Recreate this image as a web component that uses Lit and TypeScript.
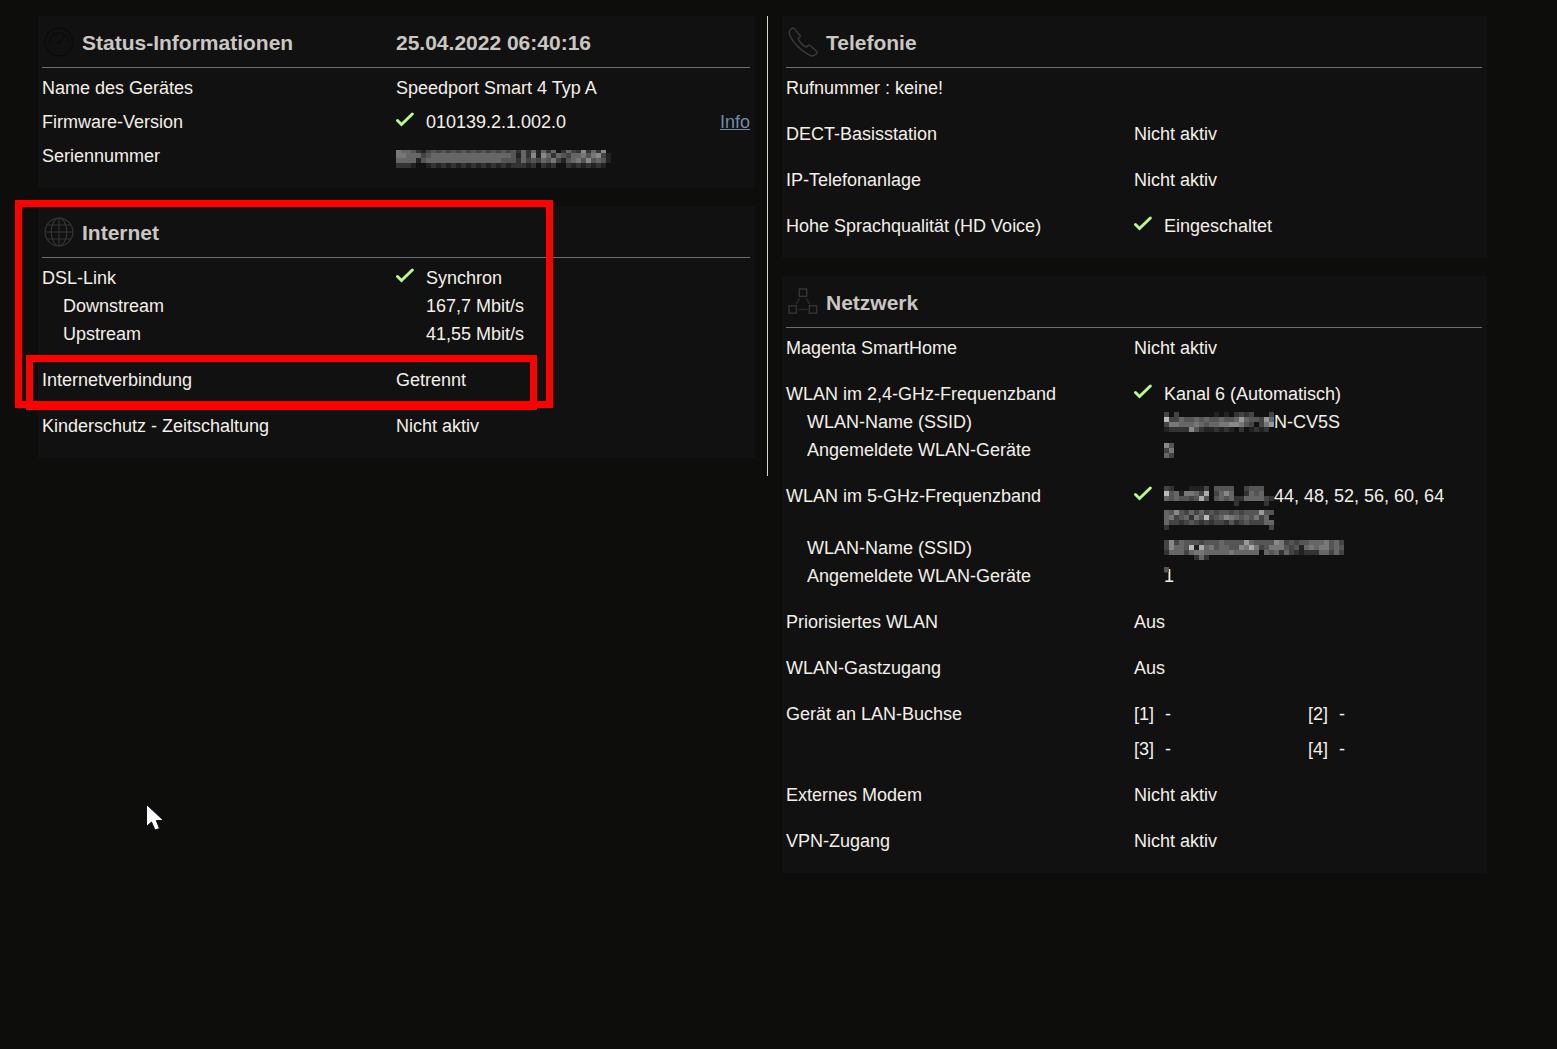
import { LitElement, html, svg, css, nothing } from "lit";
import { customElement, property } from "lit/decorators.js";

/* Pixelated redaction. Each character is one 5px cell: "." is empty, a hex digit is a grey level. */
@customElement("pixel-mask")
class PixelMask extends LitElement {
  @property({ attribute: false }) rows: string[] = [];
  @property({ type: Number }) crop = 0;

  static styles = css`
    :host { display: block; flex: none; }
    .mask { display: block; }
  `;

  render() {
    const cell = 5;
    const width = Math.max(0, ...this.rows.map((r) => r.length)) * cell;
    const height = this.rows.length * cell - this.crop;
    return html`<svg class="mask" width=${width} height=${height}
      viewBox="0 ${this.crop} ${width} ${height}" shape-rendering="crispEdges" aria-hidden="true">
      ${this.rows.map((row, y) => [...row].map((c, x) =>
        c === "." ? nothing : svg`<rect x=${x * cell} y=${y * cell} width=${cell} height=${cell}
          fill=${`#${c}${c}${c}`}></rect>`))}
    </svg>`;
  }
}

const SERIAL = [
  "766532454545454545454545363626361364383638.",
  "7766645666666666666666652638286365466757842",
  "6666256666666666666665553645465742567585652",
  "333211232323232323232323332313231.32323232.",
];
const SSID_24 = [
  "4.4.......2.2.34341..4",
  "b446556565565569655496",
  "4776667656677887541479",
  "2333385322323213.23231",
];
const COUNT_24 = ["85", "47", "64"];
const CHANNEL_A = [
  "431.12224.5555..4555..",
  "b5627764a.4686..3656..",
  "6565545a5.565633666643",
  "..............3.....3.",
];
const CHANNEL_B = [
  "6585464645455454555955",
  "6745637 5b456876565746".replace(" ", ""),
  "6443454343443534544466",
  "3....................4",
];
const SSID_5 = [
  "....................................",
  "484655545556555596555587454556667564",
  "48665b2a675665587a745777545267677565",
  "366646776666676666616563643233366464",
  "......363...........................",
];
const COUNT_5 = ["5"];

const speedIcon = svg`
  <g fill="none" stroke="#0b0b0b" stroke-width="1.2" stroke-linecap="round">
    <circle cx="15" cy="15" r="13.8"></circle>
    <path d="M5.5 15a9.6 9.6 0 0 1 14-8M23 9.5a9.6 9.6 0 0 1 1.6 5.5M15 15.5 21.5 8"></path>
    <circle cx="14.8" cy="15.5" r="1"></circle>
  </g>`;
const globeIcon = svg`
  <g fill="none" stroke="#343434" stroke-width="1.2">
    <circle cx="15" cy="15" r="13.9"></circle>
    <ellipse cx="15" cy="15" rx="7.8" ry="13.9"></ellipse>
    <path d="M15 1v28M1 15h28M3.5 8h23M3.5 22h23"></path>
  </g>`;
const phoneIcon = svg`
  <path fill="none" stroke="#3a3a3a" stroke-width="1.4" stroke-linejoin="round"
    d="M3.3 1.7 C4.3 .9 5.6 1 6.5 1.9 L11.8 8.2 C12.3 8.9 12.3 9.6 11.7 10.2
       C10.7 11 10 11.5 10.3 12.4 C12 15.4 15 18.6 18 20 C18.9 20.2 19.3 19.4 20.1 18.5
       C20.8 17.9 21.5 17.9 22.2 18.5 L28.3 24 C29.2 24.9 29.2 26 28.4 26.9
       C26.3 29.2 23.5 29.5 20.5 27.7 C12 22.6 5.5 16 1.9 8.6 C.7 5.9 1 3.6 3.3 1.7Z"></path>`;
const networkIcon = svg`
  <g fill="none" stroke="#333" stroke-width="1.5">
    <rect x="11.3" y="2" width="7.4" height="7.4"></rect>
    <rect x="1" y="18.8" width="7.4" height="7.4"></rect>
    <rect x="21.3" y="18.8" width="7.4" height="7.4"></rect>
    <path stroke="#2a2a2a" d="M11.6 11.5 8.3 17M18.4 11.5 21.7 17M10.5 22.6h9"></path>
  </g>`;

@customElement("app-root")
class AppRoot extends LitElement {
  static styles = css`
    :host {
      display: block;
      position: relative;
      box-sizing: border-box;
      min-height: 100vh;
      padding: 16px 70px 16px 38px;
      background: #0d0d0b;
      color: #f3f0e8;
      font: 18px/24px "Liberation Sans", Arial, sans-serif;
    }
    .page { display: grid; grid-template-columns: 730fr 719fr; align-items: start; }
    .column { display: flex; flex-direction: column; gap: 18px; min-width: 0; }
    .left { padding: 0 12px 18px 0; border-right: 1px solid #d6d3ce; }
    .right { padding-left: 14px; }
    .panel { position: relative; padding: 0 5px 20px 4px; background: #111; }
    .head {
      display: grid; grid-template-columns: 1fr 1fr; align-items: center;
      box-sizing: border-box; height: 52px; padding-top: 2px;
      border-bottom: 1px solid #6f6f6f; color: #cac6c1;
    }
    .title { display: flex; align-items: center; gap: 8px; }
    .icon { display: block; flex: none; margin: 0 0 2px 2px; width: 30px; height: 30px; }
    h2, .date { margin: 0; font-size: 21px; line-height: 24px; font-weight: bold; }
    .rows { display: flex; flex-direction: column; gap: 22px; margin: 0; padding-top: 8px; }
    .tight { gap: 10px; }
    .group { display: flex; flex-direction: column; gap: 4px; }
    .row { display: grid; grid-template-columns: 1fr 1fr; }
    dt, dd { margin: 0; }
    .sub dt { padding-left: 21px; }
    .sub dd { padding-left: 30px; }
    .value { display: flex; }
    .check { display: block; flex: none; width: 18px; height: 16px; margin: 2px 12px 0 0; }
    a { margin-left: auto; color: #6f8ca6; }
    .masked { display: flex; align-items: center; height: 24px; }
    .low { align-items: flex-end; }
    .ports { display: grid; grid-template-columns: 1fr 1fr; row-gap: 11px; }
    .port { display: flex; gap: 11px; }
    .veiled { position: relative; }
    .veil { position: absolute; left: 0; top: 3px; }
    .mark { position: absolute; box-sizing: border-box; border: 7px solid #f00; pointer-events: none; }
    .outer { left: -23px; top: -6px; width: 538px; height: 208px; }
    .inner { left: -12px; top: 149px; width: 511px; height: 55px; }
    .cursor { position: absolute; left: 146px; top: 804px; }
  `;

  private check() {
    return html`<svg class="check" viewBox="0 0 18 16" role="img" aria-label="OK">
      <path d="M1.5 8.5 5.5 12.5 16.3 2" fill="none" stroke="#b9f98a" stroke-width="3" stroke-linecap="round"></path>
    </svg>`;
  }

  private row(label: string, value: unknown, cls = "") {
    return html`<div class="row ${cls}"><dt>${label}</dt><dd>${value}</dd></div>`;
  }

  private ok(content: unknown) {
    return html`<div class="value">${this.check()}${content}</div>`;
  }

  private mask(rows: string[], text: unknown = nothing, crop = 0, cls = "") {
    return html`<div class="masked ${cls}"><pixel-mask .rows=${rows} .crop=${crop}></pixel-mask>${text}</div>`;
  }

  private head(title: string, icon: unknown, date?: string) {
    return html`<header class="head">
      <div class="title"><svg class="icon" viewBox="0 0 30 30" aria-hidden="true">${icon}</svg><h2>${title}</h2></div>
      ${date ? html`<time class="date">${date}</time>` : nothing}
    </header>`;
  }

  render() {
    return html`
      <main class="page">
        <div class="column left">
          <section class="panel">
            ${this.head("Status-Informationen", speedIcon, "25.04.2022 06:40:16")}
            <dl class="rows tight">
              ${this.row("Name des Gerätes", "Speedport Smart 4 Typ A")}
              ${this.row("Firmware-Version", this.ok(html`<span>010139.2.1.002.0</span><a href="#info">Info</a>`))}
              ${this.row("Seriennummer", this.mask(SERIAL, nothing, 2, "low"))}
            </dl>
          </section>
          <section class="panel">
            ${this.head("Internet", globeIcon)}
            <dl class="rows">
              <div class="group">
                ${this.row("DSL-Link", this.ok("Synchron"))}
                ${this.row("Downstream", "167,7 Mbit/s", "sub")}
                ${this.row("Upstream", "41,55 Mbit/s", "sub")}
              </div>
              ${this.row("Internetverbindung", "Getrennt")}
              ${this.row("Kinderschutz - Zeitschaltung", "Nicht aktiv")}
            </dl>
            <div class="mark outer"></div>
            <div class="mark inner"></div>
          </section>
        </div>
        <div class="column right">
          <section class="panel">
            ${this.head("Telefonie", phoneIcon)}
            <dl class="rows">
              ${this.row("Rufnummer : keine!", nothing)}
              ${this.row("DECT-Basisstation", "Nicht aktiv")}
              ${this.row("IP-Telefonanlage", "Nicht aktiv")}
              ${this.row("Hohe Sprachqualität (HD Voice)", this.ok("Eingeschaltet"))}
            </dl>
          </section>
          <section class="panel">
            ${this.head("Netzwerk", networkIcon)}
            <dl class="rows">
              ${this.row("Magenta SmartHome", "Nicht aktiv")}
              <div class="group">
                ${this.row("WLAN im 2,4-GHz-Frequenzband", this.ok("Kanal 6 (Automatisch)"))}
                ${this.row("WLAN-Name (SSID)", this.mask(SSID_24, "N-CV5S"), "sub")}
                ${this.row("Angemeldete WLAN-Geräte", this.mask(COUNT_24), "sub")}
              </div>
              <div class="group">
                ${this.row("WLAN im 5-GHz-Frequenzband", this.ok(html`<div>
                  ${this.mask(CHANNEL_A, "44, 48, 52, 56, 60, 64")}
                  ${this.mask(CHANNEL_B)}
                </div>`))}
                ${this.row("WLAN-Name (SSID)", this.mask(SSID_5, nothing, 1, "low"), "sub")}
                ${this.row("Angemeldete WLAN-Geräte", html`<div class="veiled">1<pixel-mask class="veil" .rows=${COUNT_5}></pixel-mask></div>`, "sub")}
              </div>
              ${this.row("Priorisiertes WLAN", "Aus")}
              ${this.row("WLAN-Gastzugang", "Aus")}
              ${this.row("Gerät an LAN-Buchse", html`<div class="ports">
                ${[1, 2, 3, 4].map((n) => html`<div class="port"><span>[${n}]</span><span>-</span></div>`)}
              </div>`)}
              ${this.row("Externes Modem", "Nicht aktiv")}
              ${this.row("VPN-Zugang", "Nicht aktiv")}
            </dl>
          </section>
        </div>
      </main>
      <svg class="cursor" width="19" height="27" viewBox="0 0 19 27" aria-hidden="true">
        <path d="M.5 .5V22.5L5.5 18 9 26 13.5 24.5 10.3 16.5H17.5Z" fill="#fff" stroke="#10101c" stroke-width="1"></path>
      </svg>
    `;
  }
}
